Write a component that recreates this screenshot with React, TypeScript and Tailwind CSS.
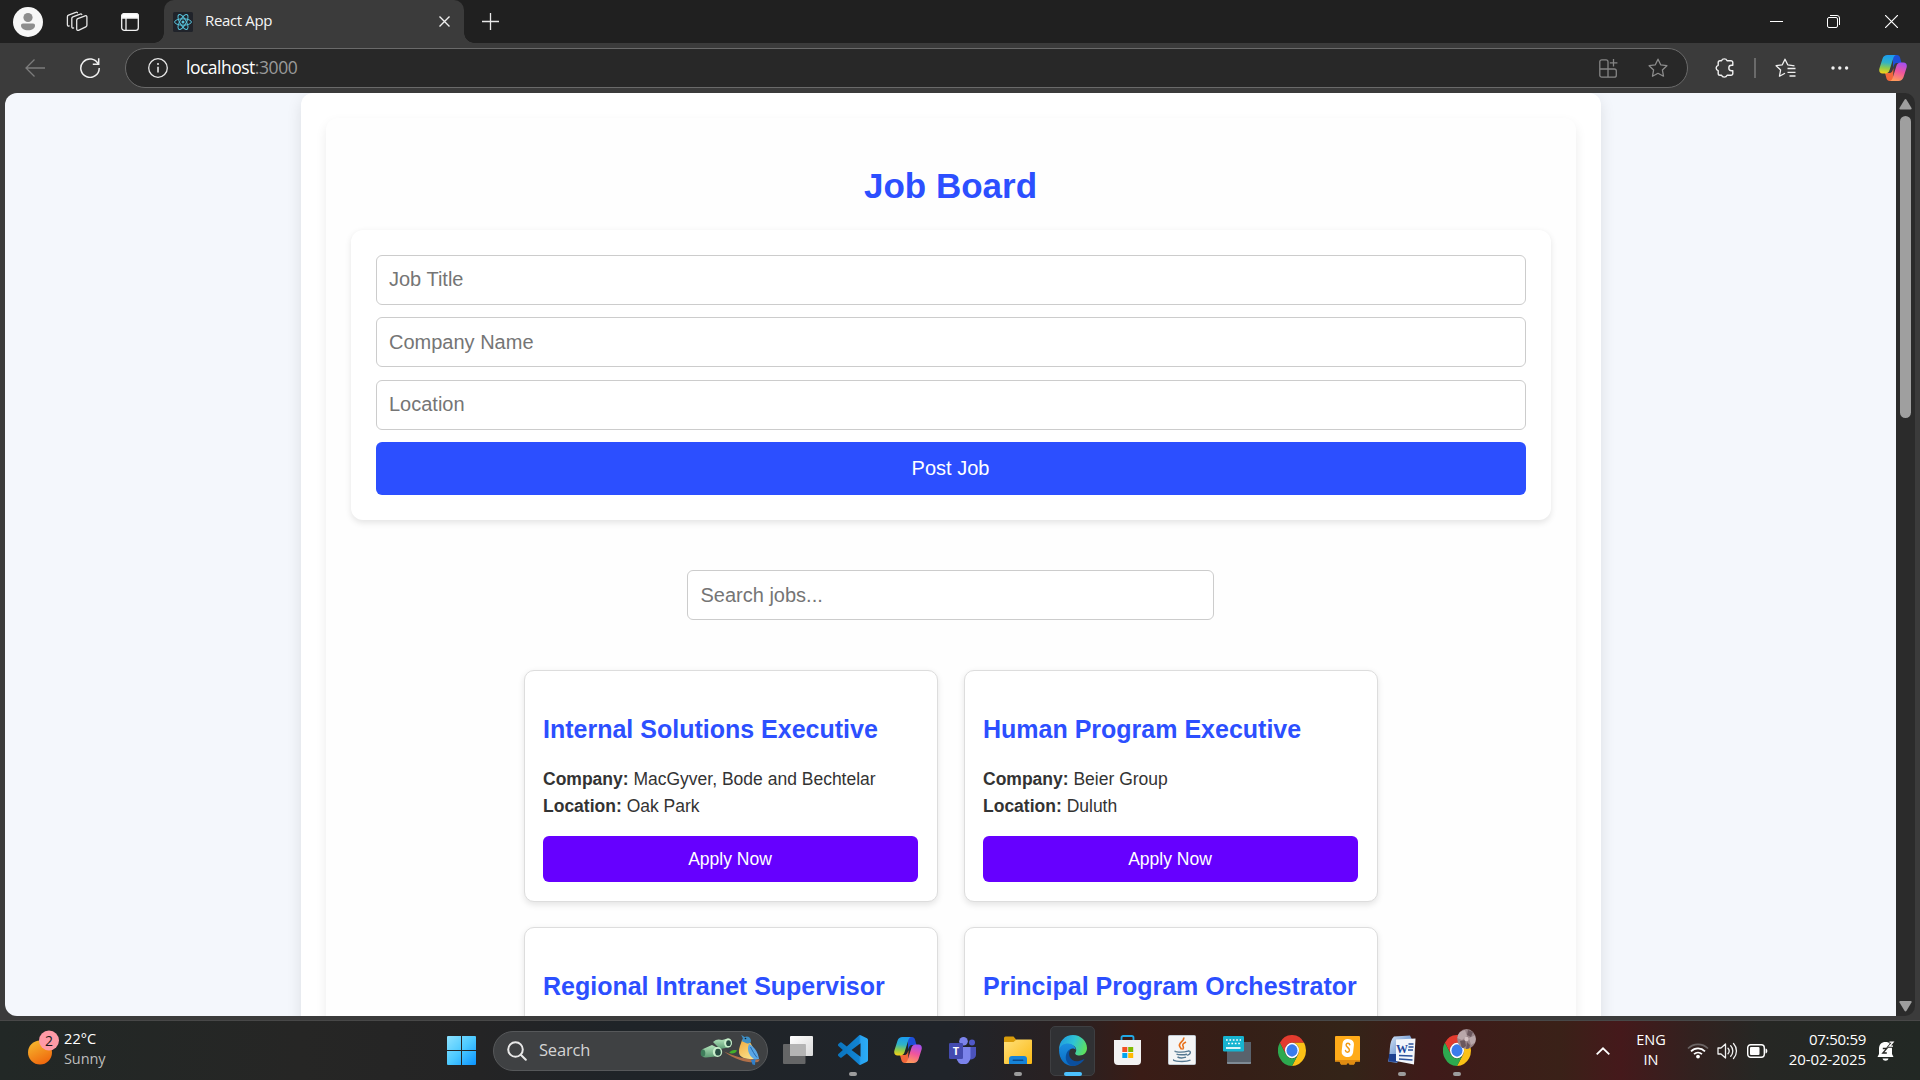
import React from "react";

const ui = "font-['Open_Sans','Noto_Sans',sans-serif]";

/* ---------- browser icons ---------- */

const ReactLogo = () => (
  <svg width="20" height="20" viewBox="0 0 20 20" fill="none" stroke="#58c4dc" strokeWidth="1">
    <rect width="20" height="20" rx="1.5" fill="#20232a" stroke="none" />
    <circle cx="10" cy="10" r="1.5" fill="#58c4dc" stroke="none" />
    <ellipse cx="10" cy="10" rx="8.4" ry="3.2" />
    <ellipse cx="10" cy="10" rx="8.4" ry="3.2" transform="rotate(60 10 10)" />
    <ellipse cx="10" cy="10" rx="8.4" ry="3.2" transform="rotate(120 10 10)" />
  </svg>
);

const Workspaces = () => (
  <svg width="22" height="22" viewBox="0 0 22 22" fill="none" stroke="#e6e6e6" strokeWidth="1.3" strokeLinejoin="round" strokeLinecap="round">
    <path d="M10.700 9.200c0-.8.4-1.300 1.100-1.600l7.300-2.800c1-.4 1.800.1 1.800 1.200v8.200c0 .8-.4 1.300-1.100 1.600l-7.300 3.500c-1 .4-1.800-.1-1.800-1.200Z" />
    <path d="M7.600 16.900c-1 .4-1.800-.1-1.800-1.200V7.500c0-.8.400-1.300 1.100-1.600l7.300-2.800c.7-.3 1.300-.1 1.600.4" />
    <path d="M3.200 14.900c-1 .4-1.800-.1-1.800-1.200V5.700c0-.8.400-1.300 1.100-1.600L9.800 1.300c.7-.3 1.300-.1 1.600.4" />
  </svg>
);

const TabActions = () => (
  <svg width="18" height="18" viewBox="0 0 18 18" fill="none" stroke="#f2f2f2" strokeWidth="1.3">
    <rect x=".7" y=".7" width="16.6" height="16.6" rx="2.6" />
    <path d="M.7 5V3.300A2.600 2.600 0 0 1 3.300.7h11.400a2.600 2.600 0 0 1 2.600 2.600V5Z" fill="#fff" />
    <path d="M5 5v12.300" />
  </svg>
);

const StarPath = "M10 1.200l2.700 5.600 6.200.9-4.500 4.300 1.100 6.200L10 15.300l-5.500 2.900 1.100-6.200L1.100 7.700l6.200-.9Z";

const CopilotIcon = ({ id }: { id: string }) => (
  <svg width="28" height="26" viewBox="0 0 28 26">
    <defs>
      <linearGradient id={id + "a"} x1=".4" y1="0" x2=".3" y2="1">
        <stop offset="0" stopColor="#1b9cf0" />
        <stop offset=".4" stopColor="#2fb2c8" />
        <stop offset=".7" stopColor="#8ecb4c" />
        <stop offset="1" stopColor="#f7d117" />
      </linearGradient>
      <linearGradient id={id + "b"} x1=".7" y1="0" x2=".4" y2="1">
        <stop offset="0" stopColor="#a44ff0" />
        <stop offset=".5" stopColor="#f0559c" />
        <stop offset="1" stopColor="#ff9a5c" />
      </linearGradient>
    </defs>
    <path d="M14 0h4c1.500 0 2.500 1 3 2.500L22.500 8h-4c-3 0-3.500 2-4.500 5Z" fill="#1d4fd8" />
    <path d="M14 26h-3.500c-1.500 0-2.500-1-3-2.500L6 18h4c3 0 3.500-2 4.500-5Z" fill="#f2673a" />
    <path d="M8.500 0H17c-1.500.4-2.200 1.600-2.800 3.400L10.600 15c-.7 2.200-2 3.500-4.300 3.500H3.500C.8 18.500-.3 16.200.4 13.500L3.500 3.700C4.300 1.300 6 0 8.500 0Z" fill={`url(#${id}a)`} />
    <path d="M19.500 26H11c1.500-.4 2.200-1.600 2.800-3.400L17.400 11c.7-2.200 2-3.500 4.300-3.500h2.800c2.700 0 3.800 2.300 3.100 5l-3.100 9.800C23.700 24.700 22 26 19.500 26Z" fill={`url(#${id}b)`} />
  </svg>
);

/* ---------- taskbar icons ---------- */

const StartIcon = () => (
  <svg width="29" height="29" viewBox="0 0 29 29">
    <defs>
      <linearGradient id="win" x1="0" y1="0" x2="1" y2="1">
        <stop offset="0" stopColor="#8ee3ff" />
        <stop offset=".5" stopColor="#4cc9ff" />
        <stop offset="1" stopColor="#0a93ff" />
      </linearGradient>
    </defs>
    <path d="M1 0h13v14H0V1a1 1 0 0 1 1-1ZM15 0h13a1 1 0 0 1 1 1v13H15ZM0 15h14v14H1a1 1 0 0 1-1-1ZM15 15h14v13a1 1 0 0 1-1 1H15Z" fill="url(#win)" />
  </svg>
);

const BirdArt = () => (
  <svg width="62" height="34" viewBox="0 0 62 34">
    <defs>
      <linearGradient id="bino" x1="0" y1="0" x2="0" y2="1">
        <stop offset="0" stopColor="#b4e6bd" />
        <stop offset="1" stopColor="#5d9b74" />
      </linearGradient>
      <linearGradient id="breast" x1="0" y1="0" x2=".6" y2="1">
        <stop offset="0" stopColor="#f3a93a" />
        <stop offset="1" stopColor="#f7df8a" />
      </linearGradient>
    </defs>
    <path d="M13 8c3-3 6-3 9-2l6-1.500c5 0 5 8 .5 9L20 15Z" fill="url(#bino)" />
    <path d="M3 15 12 11l8 4v7L6 23.500C1 24 0 18 3 15Z" fill="url(#bino)" />
    <ellipse cx="28" cy="9" rx="3.900" ry="4.500" fill="#c9efcc" />
    <ellipse cx="28.500" cy="9.200" rx="2.300" ry="2.900" fill="#284c42" />
    <ellipse cx="17.500" cy="18" rx="4.700" ry="5" fill="#c9efcc" />
    <ellipse cx="18" cy="18.200" rx="2.800" ry="3.400" fill="#284c42" />
    <ellipse cx="3" cy="19" rx="2.300" ry="3.600" fill="#3f7d5b" />
    <path d="M24 17.500c9 4 18 8 36 8l-2 2.600c-11 .9-22-1.600-34-10.600Z" fill="#b06f48" />
    <path d="M29 19c2-3 5-3.600 8-2.600-1 2.600-4 3.600-8 2.600Z" fill="#43b02a" />
    <path d="M42 6c3-2 7-1 8.500 3l6 11c1 3 0 5-4 5-7 0-13-1.500-13.500-6.500-.4-4.500 2-8.500 3-12.500Z" fill="url(#breast)" />
    <path d="M41.200.8 44.500 3c3-1.600 6.500.2 6.500 4 0 2-2 3-4.500 2.200L42 7.200l.8-3Z" fill="#3d8fc6" />
    <path d="M49 10c5 2.500 9 8 10 15l-4 .5c-5-2.500-9-9-6-15.500Z" fill="#5aa7e6" />
    <path d="M50.500 13c2 4 4 7.500 6.500 10.500" stroke="#2468ae" strokeWidth="1" fill="none" />
    <path d="m51 26 4.500-1-.5 6-2.500-.5Z" fill="#2f7fc9" />
    <circle cx="45.500" cy="4.500" r=".8" fill="#12202c" />
  </svg>
);

const TaskView = () => (
  <svg width="30" height="28" viewBox="0 0 30 28">
    <defs>
      <linearGradient id="tv" x1="0" y1="0" x2="1" y2="1">
        <stop offset="0" stopColor="#fff" />
        <stop offset="1" stopColor="#d9d9d9" />
      </linearGradient>
    </defs>
    <rect x="7" y="0" width="23" height="20" rx="1" fill="url(#tv)" />
    <rect x="0" y="8" width="22.5" height="20" rx="1" fill="#777" fillOpacity=".8" />
    <path d="M7 8h15.500v12H7Z" fill="#b4b4b4" />
  </svg>
);

const VsCode = () => (
  <svg width="30" height="30" viewBox="0 0 24 24">
    <defs>
      <linearGradient id="vsc" x1="0" y1="0" x2="1" y2="0">
        <stop offset="0" stopColor="#0a74bd" />
        <stop offset=".7" stopColor="#1284d3" />
        <stop offset=".76" stopColor="#28a2f0" />
        <stop offset="1" stopColor="#2badf6" />
      </linearGradient>
    </defs>
    <path fill="url(#vsc)" d="M23.150 2.587L18.210.210a1.494 1.494 0 0 0-1.705.290l-9.460 8.630-4.120-3.128a.999.999 0 0 0-1.276.057L.327 7.261A1 1 0 0 0 .326 8.740L3.899 12 .326 15.260a1 1 0 0 0 .001 1.479L1.650 17.940a.999.999 0 0 0 1.276.057l4.120-3.128 9.460 8.630a1.492 1.492 0 0 0 1.704.290l4.942-2.377A1.500 1.500 0 0 0 24 20.060V3.939a1.500 1.500 0 0 0-.850-1.352zm-5.146 14.861L10.826 12l7.178-5.448v10.896z" />
  </svg>
);

const Teams = () => (
  <svg width="28" height="27" viewBox="0 0 28 27">
    <circle cx="23" cy="5.500" r="3" fill="#5059c9" />
    <path d="M18 10h9v7.500a5 5 0 0 1-5 5h-4Z" fill="#4b53bc" />
    <circle cx="14.500" cy="4.300" r="4.300" fill="#7b83eb" />
    <path d="M7.500 10h14v10.500a6.500 6.500 0 0 1-14 0Z" fill="#7b83eb" />
    <rect x="0" y="6" width="14" height="16" rx="1.3" fill="#444bb0" />
    <text x="7" y="18" fontSize="11" fontWeight="700" textAnchor="middle" fill="#fff" fontFamily="Open Sans, sans-serif">T</text>
  </svg>
);

const Explorer = () => (
  <svg width="28" height="28" viewBox="0 0 28 28">
    <defs>
      <linearGradient id="fold" x1="0" y1="0" x2="1" y2="1">
        <stop offset="0" stopColor="#ffe07a" />
        <stop offset="1" stopColor="#fbb914" />
      </linearGradient>
    </defs>
    <path d="M0 2a1.500 1.500 0 0 1 1.500-1.500h8L12.500 4V8H0Z" fill="#d99c0a" />
    <path d="M0 6h9.500l3-2.500H27a1 1 0 0 1 1 1V27a1 1 0 0 1-1 1H1a1 1 0 0 1-1-1Z" fill="url(#fold)" />
    <path d="M5 28v-5a3 3 0 0 1 3-3h12a3 3 0 0 1 3 3v5Z" fill="#1683d8" />
    <rect x="8.500" y="23.500" width="11" height="1.500" rx=".7" fill="#0a4a8c" />
  </svg>
);

const Edge = () => (
  <svg width="28" height="31" viewBox="0 0 28 31">
    <defs>
      <linearGradient id="edgeTop" x1="0" y1=".3" x2="1" y2=".6">
        <stop offset="0" stopColor="#1f9be0" />
        <stop offset=".5" stopColor="#2fc4d4" />
        <stop offset="1" stopColor="#5fe05a" />
      </linearGradient>
      <linearGradient id="edgeLow" x1="0" y1="0" x2="0" y2="1">
        <stop offset="0" stopColor="#1b8fe0" />
        <stop offset="1" stopColor="#0a6cc4" />
      </linearGradient>
    </defs>
    <path d="M0 15C0 6 6 0 14 0s14 6.500 14 13c0 4.500-3 7.500-7.500 7.500-3.500 0-5-1.500-4-3 1.500-2 1-6-3.500-7.500C8 8.500 2 10.500 0 15Z" fill="url(#edgeTop)" />
    <path d="M0 15c1-4.500 5-6.500 9-6.500 4.500 0 7.500 3 7.900 6.500-1.500-2-6-2.500-7.200 2C8 24 13 29 19 29c-2 1.300-3.500 1.800-6 1.800C5.500 30.800 0 24 0 15Z" fill="url(#edgeLow)" />
    <path d="M11.500 14.200C8 19 11 27.500 20 26c2.300-.4 3.900-1.200 5.600-2.200C23 28.500 18.500 31 14 31 8 30 6 24.500 7 20c.7-3 2.200-5 4.500-5.800Z" fill="#0b4f9e" />
  </svg>
);

const Store = () => (
  <svg width="27" height="30" viewBox="0 0 27 30">
    <path d="M7.500 6V2.700C7.500 1.500 8.300 1 9.200 1h8.600c.9 0 1.700.5 1.700 1.700V6" fill="none" stroke="#22a9e6" strokeWidth="1.8" />
    <path d="M0 5h27v21a4 4 0 0 1-4 4H4a4 4 0 0 1-4-4Z" fill="#f2f2f2" />
    <path d="M8.300 12h5v5h-5Z" fill="#f25022" />
    <path d="M14.200 12h5v5h-5Z" fill="#7fba00" />
    <path d="M8.300 18h5v5h-5Z" fill="#00a4ef" />
    <path d="M14.200 18h5v5h-5Z" fill="#ffb900" />
  </svg>
);

const Java = () => (
  <svg width="28" height="30" viewBox="0 0 28 30">
    <rect x=".5" y=".5" width="27" height="29" rx="1" fill="#f4f5f6" stroke="#c3ccd4" />
    <path d="M15.500 2.500c2 3-5.500 5-4 8.500.5 1.200 1.500 2 2 3.500M18 7c-3 1.500-4 2.800-2.800 4.500.7 1.200 0 2.300-.7 3" fill="none" stroke="#e8711c" strokeWidth="1.6" />
    <path d="M7.500 16c-2.500 1 7 1.800 12.500.2M8.500 19c1.500 1 7.500 1 10.500.2M9.500 22c2 1 6 1 8.500.2M6 24.500c-3 1.800 11 3 16.500.6M20 16c3-.5 3.500 3-.8 4.300" fill="none" stroke="#557891" strokeWidth="1.4" />
  </svg>
);

const Keyboard = () => (
  <svg width="28" height="28" viewBox="0 0 28 28">
    <path d="M4 6h24v21a1 1 0 0 1-1 1H5a1 1 0 0 1-1-1Z" fill="#59626c" />
    <path d="M4 26h24v1a1 1 0 0 1-1 1H5a1 1 0 0 1-1-1Z" fill="#7f8a94" />
    <rect x="0" y="0" width="21" height="15.5" rx="1.3" fill="#17b4d0" />
    <path d="M3 4h15M5 7.500h12" stroke="#fff" strokeWidth="1.6" strokeDasharray="1.7 1.7" />
    <path d="M3 12h14.500" stroke="#fff" strokeWidth="1.7" />
  </svg>
);

const Chrome = () => (
  <svg width="28" height="31" viewBox="0 0 48 48" preserveAspectRatio="none">
    <path d="M3.200 12A24 24 0 0 1 44.780 12H24A12 12 0 0 0 13.600 30Z" fill="#e33b2e" />
    <path d="M44.780 12A24 24 0 0 1 24 48L34.400 30A12 12 0 0 0 24 12Z" fill="#fbc116" />
    <path d="M24 48A24 24 0 0 1 3.200 12L13.600 30A12 12 0 0 0 34.400 30Z" fill="#2da94f" />
    <circle cx="24" cy="24" r="12" fill="#fff" />
    <circle cx="24" cy="24" r="9.500" fill="#3a7cec" />
  </svg>
);

const Scratch = () => (
  <svg width="25" height="29" viewBox="0 0 25 29">
    <path d="M1 0h23a1 1 0 0 1 1 1v24.500h-4.500L19 28.500h-4.500L13 26.500l-1.500 2H6L4.500 25.500H0V1a1 1 0 0 1 1-1Z" fill="#ffab19" />
    <path d="M0 24h25v1.500h-4.500L19 28.500h-4.500L13 26.500l-1.500 2H6L4.500 25.500H0Z" fill="#e08c12" />
    <rect x="7" y="3" width="11.500" height="18" rx="5" fill="#fff" transform="rotate(6 12.500 12.500)" />
    <path d="M14.800 8.800c-.5-2-3.400-2-3.700 0-.3 2.400 3.600 2.800 3.300 5.600-.3 2.300-3.500 2.300-3.900.2" fill="none" stroke="#f29a13" strokeWidth="1.500" strokeLinecap="round" />
  </svg>
);

const Word = () => (
  <svg width="28" height="30" viewBox="0 0 28 30">
    <defs>
      <linearGradient id="word" x1="0" y1="0" x2="1" y2="1">
        <stop offset="0" stopColor="#dbe7f7" />
        <stop offset=".5" stopColor="#7fa4d8" />
        <stop offset="1" stopColor="#1c4c9c" />
      </linearGradient>
    </defs>
    <path d="M6 1.500 22 .5l2 4L9 28 0 26.500C3 19 0 7 6 1.500Z" fill="url(#word)" />
    <path d="M1 19h9v8L.5 26.500Z" fill="#1d3f8f" />
    <path d="m8 4.500 19.500-1L26 29.500 8 26Z" fill="#f3f6fb" />
    <path d="M20.500 9h5M20.500 12h5M20 15h5M11 20.500l13.500.5M11 24l13.500 1" stroke="#2a529c" strokeWidth="1.3" />
    <text x="14" y="17.500" fontSize="12" fontWeight="700" textAnchor="middle" fill="#1f479b" fontFamily="Liberation Serif, serif">W</text>
  </svg>
);

const ChromeProfile = () => (
  <span className="relative block h-[31px] w-[28px]">
    <Chrome />
    <svg className="absolute -top-[6px] left-[14px]" width="19" height="20" viewBox="0 0 19 20">
      <defs>
        <clipPath id="face"><ellipse cx="9.500" cy="10" rx="9.300" ry="10" /></clipPath>
      </defs>
      <g clipPath="url(#face)">
        <path d="M0 0h19v20H0Z" fill="#9a868a" />
        <path d="M0 4 8 1l2 6-5 4-5-2ZM12 9l7-3v7l-5 3Z" fill="#b9a7aa" />
        <path d="m3 12 5-1 1 6-4 3ZM11 1l5 2-2 5-4-2ZM10 13l3 3-1 4H9Z" fill="#6b575d" />
        <circle cx="9.500" cy="10" r="2.200" fill="#d3c1c3" />
      </g>
    </svg>
  </span>
);

type App = { name: string; icon: React.ReactNode; state?: "open" | "active" };

const apps: App[] = [
  { name: "Task View", icon: <TaskView /> },
  { name: "VS Code", icon: <VsCode />, state: "open" },
  { name: "Copilot", icon: <CopilotIcon id="cpb" /> },
  { name: "Teams", icon: <Teams /> },
  { name: "Explorer", icon: <Explorer />, state: "open" },
  { name: "Edge", icon: <Edge />, state: "active" },
  { name: "Store", icon: <Store /> },
  { name: "Java", icon: <Java /> },
  { name: "Keyboard", icon: <Keyboard /> },
  { name: "Chrome", icon: <Chrome /> },
  { name: "Scratch", icon: <Scratch /> },
  { name: "Word", icon: <Word />, state: "open" },
  { name: "Chrome profile", icon: <ChromeProfile />, state: "open" },
];

/* ---------- browser chrome ---------- */

function TitleBar() {
  return (
    <div className="flex h-[43px] items-center bg-[#202020]">
      <svg className="ml-[13px]" width="30" height="30" viewBox="0 0 30 30">
        <circle cx="15" cy="15" r="15" fill="#f7f7f7" />
        <circle cx="15" cy="10.500" r="4.600" fill="#8d8d8d" />
        <path d="M8 18.500c0-1.200.7-2 2-2h10c1.300 0 2 .8 2 2 0 3-3 4.800-7 4.800s-7-1.800-7-4.800Z" fill="#8d8d8d" />
      </svg>
      <div className="ml-[23px]"><Workspaces /></div>
      <div className="ml-[33px]"><TabActions /></div>
      <div className="relative ml-[25px] flex h-full w-[300px] items-center rounded-t-[10px] bg-[#3b3b3b]">
        <span className="absolute bottom-0 -left-[10px] h-[10px] w-[10px] bg-[radial-gradient(circle_at_0_0,#202020_9.500px,#3b3b3b_10px)]" />
        <span className="absolute bottom-0 -right-[10px] h-[10px] w-[10px] bg-[radial-gradient(circle_at_100%_0,#202020_9.500px,#3b3b3b_10px)]" />
        <span className="ml-[9px]"><ReactLogo /></span>
        <span className={`${ui} ml-3 -mt-[3px] whitespace-nowrap text-[15px] tracking-[-0.35px] text-[#f5f5f5]`}>React App</span>
        <svg className="mr-[14px] ml-auto" width="11" height="11" viewBox="0 0 11 11" stroke="#f0f0f0" strokeWidth="1.4">
          <path d="m.5.5 10 10M10.500.5l-10 10" />
        </svg>
      </div>
      <svg className="ml-[18px]" width="17" height="17" viewBox="0 0 17 17" stroke="#e8e8e8" strokeWidth="1.3">
        <path d="M8.500 0v17M0 8.500h17" />
      </svg>
      <div className="ml-auto flex">
        <span className="flex w-[57.5px] items-center justify-center">
          <svg width="13" height="13" viewBox="0 0 13 13" stroke="#fff"><path d="M0 6.500h13" /></svg>
        </span>
        <span className="flex w-[57.5px] items-center justify-center">
          <svg width="13" height="13" viewBox="0 0 13 13" stroke="#fff" fill="none">
            <rect x=".5" y="2.500" width="10" height="10" rx="1.500" />
            <path d="M3 .5h7a2.500 2.500 0 0 1 2.500 2.500v7" />
          </svg>
        </span>
        <span className="flex w-[57.5px] items-center justify-center">
          <svg width="13" height="13" viewBox="0 0 13 13" stroke="#fff" strokeWidth="1.2"><path d="m0 0 13 13M13 0 0 13" /></svg>
        </span>
      </div>
    </div>
  );
}

function Toolbar() {
  return (
    <div className="flex h-[50px] items-center bg-[#3b3b3b]">
      <svg className="ml-[25px]" width="20" height="18" viewBox="0 0 20 18" fill="none" stroke="#7c7c7c" strokeWidth="1.3">
        <path d="M20 9H1M9.500.5 1 9l8.500 8.500" />
      </svg>
      <svg className="ml-[35px]" width="20" height="20" viewBox="0 0 20 20" fill="none" stroke="#f0f0f0" strokeWidth="1.5">
        <path d="M18.300 6.200A9.200 9.200 0 1 0 19.200 10" />
        <path d="M18.700.3v5.900h-5.900" />
      </svg>
      <div className="ml-[25px] flex h-10 w-[1563px] items-center rounded-full border border-[#6a6a6a] bg-[#282828]">
        <svg className="ml-[22px]" width="20" height="20" viewBox="0 0 20 20" fill="none" stroke="#e8e8e8" strokeWidth="1.3">
          <circle cx="10" cy="10" r="9.300" />
          <path d="M10 8.800v5.700" strokeWidth="1.6" />
          <circle cx="10" cy="6" r="1" fill="#e8e8e8" stroke="none" />
        </svg>
        <span className={`${ui} ml-[18px] -mt-px whitespace-nowrap text-[17.5px] tracking-[-0.5px] text-white`}>
          localhost<span className="tracking-[-0.4px] text-[#9a9a9a]">:3000</span>
        </span>
        <svg className="ml-auto" width="19" height="19" viewBox="0 0 19 19" fill="none" stroke="#858585" strokeWidth="1.3">
          <path d="M9 10H.8V2.800a2 2 0 0 1 2-2H7a2 2 0 0 1 2 2Zm0 0v8.200M.8 10v6.200a2 2 0 0 0 2 2h12.500a2 2 0 0 0 2-2V12a2 2 0 0 0-2-2H9M14.500 0v7.600M10.800 3.800h7.600" />
        </svg>
        <svg className="mr-[19px] ml-[30px]" width="20" height="20" viewBox="0 0 20 20" fill="none" stroke="#8c8c8c" strokeWidth="1.3" strokeLinejoin="round">
          <path d={StarPath} />
        </svg>
      </div>
      <svg className="ml-[27px]" width="20" height="20" viewBox="0 0 20 20" fill="none" stroke="#f0f0f0" strokeWidth="1.4" strokeLinejoin="round">
        <path d="M6.500 2.800a3 3 0 0 1 5.600 0H16a1.800 1.800 0 0 1 1.800 1.800v2.700h-1.300a2.700 2.700 0 0 0 0 5.400h1.300v2.700a1.800 1.800 0 0 1-1.800 1.800h-3.900a3 3 0 0 1-5.600 0H5a1.800 1.800 0 0 1-1.800-1.800v-2.700a2.800 2.800 0 0 1 0-5.400V4.600A1.800 1.800 0 0 1 5 2.800Z" />
      </svg>
      <span className="ml-[19px] h-5 w-[1.5px] bg-[#6a6a6a]" />
      <svg className="ml-[19px]" width="21" height="20" viewBox="0 0 21 20" fill="none" stroke="#f0f0f0" strokeWidth="1.3" strokeLinejoin="round">
        <path d="M19.500 7.800 12.700 6.800 10 1.200 7.300 6.800l-6.200.9 4.500 4.300-1.100 6.200 5.500-2.900M12.500 10.500H20.500M12.500 14.300H20.500M14.500 18H20.500" />
      </svg>
      <svg className="ml-[35.5px]" width="18" height="4" viewBox="0 0 18 4" fill="#f0f0f0">
        <circle cx="2" cy="2" r="1.700" />
        <circle cx="8.800" cy="2" r="1.700" />
        <circle cx="15.600" cy="2" r="1.700" />
      </svg>
      <div className="ml-[30px]"><CopilotIcon id="cpa" /></div>
    </div>
  );
}

/* ---------- page ---------- */

type Job = { title: string; company?: string; location?: string };

const jobs: Job[] = [
  { title: "Internal Solutions Executive", company: "MacGyver, Bode and Bechtelar", location: "Oak Park" },
  { title: "Human Program Executive", company: "Beier Group", location: "Duluth" },
  { title: "Regional Intranet Supervisor" },
  { title: "Principal Program Orchestrator" },
];

const inputClass =
  "block h-[50px] rounded-[6px] border border-[#ccc] bg-white pr-3 pl-[12.5px] text-[20px] text-[#333] outline-none placeholder:text-[#757575]";

function JobCard({ title, company, location }: Job) {
  return (
    <article className="h-[232px] rounded-[10px] border border-[#ddd] bg-white px-[18px] pt-[43.5px] text-[#333] shadow-[0_2.5px_6px_rgba(0,0,0,0.1)]">
      <h3 className="ml-[0.5px] h-[29px] whitespace-nowrap text-[25px] leading-[29px] font-bold text-[#2c4fff]">{title}</h3>
      {company && (
        <>
          <div className="mt-[22px] ml-[0.5px] text-[17.5px] leading-[27px] whitespace-nowrap">
            <p><strong>Company:</strong> {company}</p>
            <p><strong>Location:</strong> {location}</p>
          </div>
          <button className="mt-[16.5px] block h-[46px] w-[375px] rounded-[6px] bg-[#6600ff] text-[17.5px] text-white">Apply Now</button>
        </>
      )}
    </article>
  );
}

function Page() {
  return (
    <main className="h-full w-[1891px] overflow-hidden rounded-l-[12px] bg-[#f4f7fc] font-['Liberation_Sans',Arial,sans-serif]">
      <div className="mx-auto w-[1300px] rounded-[12px] bg-white p-[25px] shadow-[0_5px_15px_rgba(0,0,0,0.1)]">
        <div className="h-[1200px] rounded-[12px] bg-[#fefefe] px-[25px] pt-[48px] shadow-[0_5px_12px_rgba(0,0,0,0.08)]">
          <h1 className="h-10 text-center text-[35px] leading-10 font-bold text-[#2c4fff]">Job Board</h1>
          <form className="mt-6 flex h-[290px] flex-col rounded-[12px] bg-white p-[25px] shadow-[0_2.5px_6px_rgba(0,0,0,0.1)]">
            <input className={`${inputClass} pb-[2px]`} placeholder="Job Title" />
            <input className={`${inputClass} mt-3`} placeholder="Company Name" />
            <input className={`${inputClass} mt-[13px] pb-[2px]`} placeholder="Location" />
            <button type="button" className="mt-3 h-[53px] rounded-[6px] bg-[#2c4fff] pb-px text-[20px] text-white">Post Job</button>
          </form>
          <input className={`${inputClass} mx-auto mt-[50px] w-[527px]`} placeholder="Search jobs..." />
          <section className="ml-[173px] mt-[50px] grid grid-cols-[414px_414px] gap-x-[26px] gap-y-[25px]">
            {jobs.map((j) => (
              <JobCard key={j.title} {...j} />
            ))}
          </section>
        </div>
      </div>
    </main>
  );
}

function ScrollBar() {
  return (
    <div className="flex w-[19px] flex-col items-center rounded-r-[10px] bg-[#2b2b2b]">
      <svg className="mt-[6px]" width="13" height="11" viewBox="0 0 13 11" fill="#9f9f9f"><path d="M5.500.8a1.200 1.200 0 0 1 2 0l5 8.200c.4.8 0 1.500-.9 1.500H1.400c-.9 0-1.300-.7-.9-1.500Z" /></svg>
      <div className="mt-[6px] h-[302px] w-[11px] rounded-full bg-[#9f9f9f]" />
      <svg className="mt-auto mb-[4px]" width="13" height="11" viewBox="0 0 13 11" fill="#9f9f9f"><path d="M5.500 9.700a1.200 1.200 0 0 0 2 0l5-8.200c.4-.8 0-1.500-.9-1.500H1.400C.5 0 .1.700.5 1.500Z" /></svg>
    </div>
  );
}

/* ---------- taskbar ---------- */

function TaskBar() {
  return (
    <div className={`${ui} flex h-[59px] items-center bg-[linear-gradient(90deg,#222826_0px,#262625_300px,#242425_480px,#1f2428_620px,#20242a_950px,#2b2020_1080px,#3a1c16_1140px,#351f17_1240px,#342418_1350px,#3f1a19_1430px,#3a2118_1560px,#45191b_1620px,#33211f_1690px,#262724_1760px,#222824_1920px)] text-white`}>
      <div className="ml-[28px] flex w-[419px] items-center">
        <svg width="32" height="36" viewBox="0 0 32 36" className="-mt-[8px]">
          <defs>
            <linearGradient id="sun" x1=".2" y1="0" x2=".7" y2="1">
              <stop offset="0" stopColor="#f5b82e" />
              <stop offset="1" stopColor="#f0650c" />
            </linearGradient>
          </defs>
          <circle cx="12" cy="23.500" r="12" fill="url(#sun)" />
          <circle cx="21" cy="11.500" r="10" fill="#ff9aa6" />
          <text x="21" y="16.500" fontSize="14" textAnchor="middle" fill="#1a1a1a" fontFamily="Open Sans, sans-serif">2</text>
        </svg>
        <div className="-mt-[3px] ml-[4px] text-[14.5px] leading-[20px] tracking-[-0.1px]">
          <p className="tracking-[0.1px]">22°C</p>
          <p className="text-[#bdbdbd]">Sunny</p>
        </div>
      </div>
      <StartIcon />
      <div className="ml-[17px] flex h-10 w-[275px] items-center rounded-full border border-[#56585a] bg-[#3f4143]">
        <svg className="ml-[13px]" width="20" height="20" viewBox="0 0 20 20" fill="none" stroke="#e8e8e8" strokeWidth="2" strokeLinecap="round">
          <circle cx="8.500" cy="8.500" r="7.300" />
          <path d="m13.800 13.800 5 5" />
        </svg>
        <span className="-mt-px ml-[12px] text-[16.5px] tracking-[-0.2px] text-[#d4d4d4]">Search</span>
        <span className="mr-[5px] ml-auto"><BirdArt /></span>
      </div>
      <div className="ml-[2.5px] flex h-full items-center">
        {apps.map((a) => (
          <div key={a.name} className="flex h-full w-[54.93px] items-center justify-center">
            <div className={`relative flex h-[50px] w-[45px] items-center justify-center rounded-[5px] pb-px ${a.state === "active" ? "border border-[#3e3f42] bg-[#303134]" : ""}`}>
              {a.icon}
              {a.state === "open" && <span className="absolute bottom-0 left-[18.5px] h-1 w-2 rounded-full bg-[#9c9c9c]" />}
              {a.state === "active" && <span className="absolute -bottom-px left-[13px] h-1 w-[18px] rounded-full bg-[#4cc2ff]" />}
            </div>
          </div>
        ))}
      </div>
      <div className="ml-auto flex h-full items-center">
        <svg width="14" height="8" viewBox="0 0 14 8" fill="none" stroke="#fff" strokeWidth="1.8"><path d="m.7 7.300 6.300-6 6.300 6" /></svg>
        <div className="-mt-[2px] ml-[23px] w-[36px] text-center text-[14.5px] leading-[20px]">
          <p>ENG</p>
          <p>IN</p>
        </div>
        <svg className="ml-[18px]" width="22" height="17" viewBox="0 0 22 17" fill="none" stroke="#fff" strokeWidth="1.7">
          <path d="M1 6.500a14 14 0 0 1 20 0" stroke="#6b6464" />
          <path d="M4 9.300a10 10 0 0 1 14 0M7 12.200a6 6 0 0 1 8 0" />
          <circle cx="11" cy="14.600" r="1.900" fill="#fff" stroke="none" />
        </svg>
        <svg className="ml-[8px]" width="21" height="18" viewBox="0 0 21 18" fill="none" stroke="#f0f0f0" strokeWidth="1.3" strokeLinejoin="round" strokeLinecap="round">
          <path d="M1 6h3l4.500-4v14L4 12H1Z" />
          <path d="M11 6.300a4 4 0 0 1 0 5.400M13.700 3.800a7.500 7.500 0 0 1 0 10.400M16.500 1.500a11 11 0 0 1 0 15" />
        </svg>
        <svg className="ml-[9px]" width="21" height="14" viewBox="0 0 21 14" fill="none" stroke="#fff" strokeWidth="1.4">
          <rect x=".7" y=".7" width="16.6" height="12.6" rx="3" />
          <rect x="3" y="3" width="9.5" height="8" rx="1" fill="#fff" stroke="none" />
          <path d="M18.500 4.500c1.300.3 1.800 1.200 1.800 2.500s-.5 2.200-1.800 2.500Z" fill="#fff" stroke="none" />
        </svg>
        <div className="-mt-[3px] ml-[14px] w-[84px] text-right text-[15px] leading-[20px] tracking-[-0.1px] whitespace-nowrap">
          <p className="tracking-[-0.3px]">07:50:59</p>
          <p>20-02-2025</p>
        </div>
        <svg className="mr-[25px] ml-[11px]" width="18" height="20" viewBox="0 0 18 20">
          <path d="M2 8C2 3.500 4.500 1 8.500 1S15 3.500 15 8v5l1.500 3H.5L2 13Z" fill="#fff" />
          <path d="M5.500 17.500h6C11 19 10 19.700 8.500 19.700S6 19 5.500 17.500Z" fill="#fff" />
          <path d="M12.500 1.200H16l-3.500 4H16" fill="none" stroke="#262724" strokeWidth="3" />
          <path d="M12.500 1.200H16l-3.500 4H16" fill="none" stroke="#fff" strokeWidth="1.300" />
          <path d="M5.800 7.500h4l-4 4.500h4" fill="none" stroke="#262724" strokeWidth="1.300" />
        </svg>
      </div>
    </div>
  );
}

export default function App() {
  return (
    <div className="flex h-[1080px] w-[1920px] flex-col overflow-hidden bg-[#3b3b3b]">
      <TitleBar />
      <Toolbar />
      <div className="flex h-[923px] px-[5px]">
        <Page />
        <ScrollBar />
      </div>
      <div className="h-[5px] border-b border-[#484848]" />
      <TaskBar />
    </div>
  );
}
